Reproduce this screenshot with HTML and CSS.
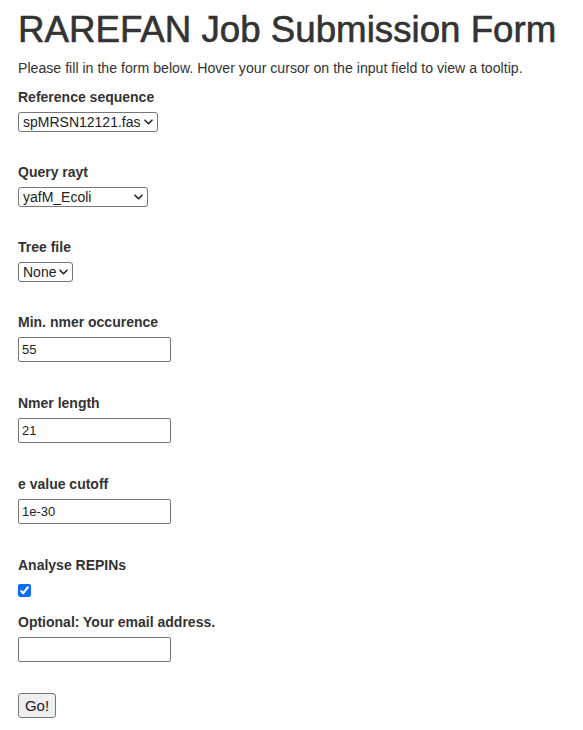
FILE: index.html
```html
<!DOCTYPE html>
<html lang="en">
<head>
<meta charset="utf-8">
<title>RAREFAN Job Submission Form</title>
<link rel="stylesheet" href="styles.css">
</head>
<body>
<main class="page">
  <h1 class="title">RAREFAN Job Submission Form</h1>
  <p class="intro">Please fill in the form below. Hover your cursor on the input field to view a tooltip.</p>
  <form class="form">
    <div class="group">
      <label class="label" for="ref">Reference sequence</label>
      <select id="ref" class="select select-ref"><option>spMRSN12121.fas</option></select>
    </div>
    <div class="group">
      <label class="label" for="rayt">Query rayt</label>
      <select id="rayt" class="select select-rayt"><option>yafM_Ecoli</option></select>
    </div>
    <div class="group">
      <label class="label" for="tree">Tree file</label>
      <select id="tree" class="select select-tree"><option>None</option></select>
    </div>
    <div class="group group-input">
      <label class="label" for="min">Min. nmer occurence</label>
      <input id="min" class="text" type="text" value="55">
    </div>
    <div class="group group-input">
      <label class="label" for="len">Nmer length</label>
      <input id="len" class="text" type="text" value="21">
    </div>
    <div class="group group-input">
      <label class="label" for="ev">e value cutoff</label>
      <input id="ev" class="text" type="text" value="1e-30">
    </div>
    <div class="group group-check">
      <label class="label" for="rep">Analyse REPINs</label>
      <input id="rep" class="check" type="checkbox" checked>
    </div>
    <div class="group group-email">
      <label class="label" for="mail">Optional: Your email address.</label>
      <input id="mail" class="text" type="text">
    </div>
    <div class="actions">
      <button type="button" class="go">Go!</button>
    </div>
  </form>
</main>
</body>
</html>
```

FILE: styles.css
```css
* { box-sizing: border-box; }
html, body { margin: 0; padding: 0; background: #fff; }
body {
  font-family: "Liberation Sans", Arial, Helvetica, sans-serif;
  font-size: 14px;
  line-height: 20px;
  color: #333;
}
.page { padding: 10px 18px 0 18px; }
.title {
  margin: 0;
  font-size: 36.7px;
  line-height: 40px;
  font-weight: 400;
  -webkit-text-stroke: 0.6px #333;
  color: #333;
}
.intro { margin: 8px 0 9px 0; font-size: 14.15px; }
.form { display: flex; flex-direction: column; }
.group { display: flex; flex-direction: column; align-items: flex-start; margin-bottom: 30px; }
.group-input { margin-bottom: 31px; }
.group-check { margin-bottom: 15px; }
.group-email { margin-bottom: 31px; }
.label { font-weight: bold; margin-bottom: 5px; display: block; }
.select {
  -webkit-appearance: none;
  appearance: none;
  height: 20px;
  margin: 0;
  padding: 0 12px 0 4px;
  border: 1px solid #767676;
  border-radius: 3px;
  background: #fff url("data:image/svg+xml;utf8,<svg xmlns='http://www.w3.org/2000/svg' width='9' height='6' viewBox='0 0 9 6'><path d='M1 1.2 L4.5 4.7 L8 1.2' fill='none' stroke='%23222' stroke-width='1.6' stroke-linecap='round' stroke-linejoin='round'/></svg>") no-repeat right 4px center;
  font-family: "Liberation Sans", Arial, sans-serif;
  font-size: 14px;
  line-height: 18px;
  color: #222;
}
.select-ref { width: 140px; }
.select-rayt { width: 130px; }
.select-tree { width: 55px; }
.text {
  width: 153px;
  height: 25px;
  margin: 0;
  padding: 1px 3px;
  border: 1px solid #767676;
  border-radius: 2px;
  font-family: "Liberation Sans", Arial, sans-serif;
  font-size: 13px;
  color: #222;
  background: #fff;
}
.check {
  width: 13px;
  height: 13px;
  margin: 0;
  accent-color: #0b6cf5;
}
.group-check .label { margin-bottom: 9px; }
.actions { display: flex; }
.go {
  width: 38px;
  height: 25px;
  padding: 0;
  margin: 0;
  border: 1px solid #767676;
  border-radius: 3px;
  background: #efefef;
  font-family: "Liberation Sans", Arial, sans-serif;
  font-size: 15px;
  color: #222;
}
```
